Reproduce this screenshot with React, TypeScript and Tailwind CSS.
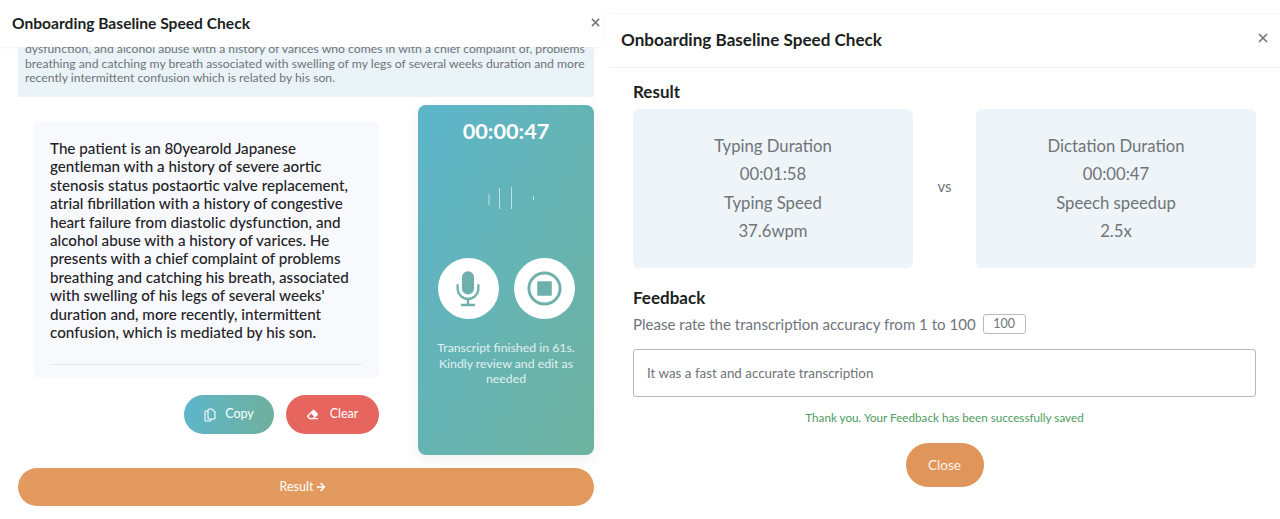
import React from 'react'
import { FaArrowRight, FaEraser } from 'react-icons/fa'

function CloseX({ className }: { className: string }) {
  return (
    <svg viewBox="0 0 10 10" className={className} fill="none" stroke="currentColor" strokeWidth="1.7">
      <path d="M1 1l8 8M9 1l-8 8" />
    </svg>
  )
}

function MicIcon() {
  return (
    <svg viewBox="0 0 30 42" className="w-[26px] h-[37px] text-[#6fb0ac]" fill="none" stroke="currentColor">
      <rect x="8" y="1" width="14" height="27" rx="7" fill="currentColor" stroke="none" />
      <path d="M3 17v4a12 12 0 0 0 24 0v-4" strokeWidth="2.6" strokeLinecap="round" />
      <path d="M15 33v6M7 40h16" strokeWidth="2.8" />
    </svg>
  )
}

function StopIcon() {
  return (
    <svg viewBox="0 0 36 36" className="w-[35px] h-[35px] text-[#6fb0ac]" fill="none" stroke="currentColor">
      <circle cx="18" cy="18" r="16" strokeWidth="3" />
      <rect x="10.5" y="10.5" width="15" height="15" rx="1" fill="currentColor" stroke="none" />
    </svg>
  )
}

function CopyIcon() {
  return (
    <svg viewBox="0 0 12 14" className="w-[12px] h-[14px]" fill="none" stroke="currentColor" strokeWidth="1.1">
      <path d="M5 1h3l3 3v6a1 1 0 0 1-1 1H5a1 1 0 0 1-1-1V2a1 1 0 0 1 1-1z" />
      <path d="M4 3H2a1 1 0 0 0-1 1v8a1 1 0 0 0 1 1h4a1 1 0 0 0 1-1v-1" />
    </svg>
  )
}

function Wave() {
  return (
    <svg viewBox="0 0 50 24" className="w-[50px] h-[24px] text-white/60" stroke="currentColor" strokeWidth="1">
      <path d="M2 8v11M12.5 2v21M24.5 1v22M46.5 10v4" />
    </svg>
  )
}

function StatCard({ rows }: { rows: string[] }) {
  return (
    <div className="w-[280px] h-[159px] bg-[#eef4f7] rounded-md flex flex-col items-center justify-center text-[16.7px] leading-[28.3px] text-[#6f7479]">
      {rows.map((r) => <div key={r}>{r}</div>)}
    </div>
  )
}

export default function App() {
  return (
    <div className="w-[1280px] h-[519px] bg-white flex overflow-hidden font-['Lato','Noto_Sans',sans-serif]">

      {/* recording step */}
      <div className="w-[604px] pt-[7px] shrink-0">
        <div className="h-[40px] flex items-start justify-between pl-[12px] pr-[4px] pt-[6px] shadow-[0_1px_2px_rgba(0,0,0,0.05)]">
          <h2 className="text-[15.6px] leading-[20px] font-bold text-[#1c1f22]">Onboarding Baseline Speed Check</h2>
          <CloseX className="w-[9px] h-[9px] text-[#777] mt-[5px]" />
        </div>

        <div className="mx-[18px] w-[576px] h-[50px] bg-[#eaf3f7] px-[7px] pb-[11px] overflow-hidden flex flex-col justify-end text-[12.2px] leading-[14.6px] text-[#6f7479]">
          <p className="whitespace-nowrap">dysfunction, and alcohol abuse with a history of varices who comes in with a chief complaint of, problems</p>
          <p className="whitespace-nowrap">breathing and catching my breath associated with swelling of my legs of several weeks duration and more</p>
          <p className="whitespace-nowrap">recently intermittent confusion which is related by his son.</p>
        </div>

        <div className="flex mt-[8px] ml-[34px] gap-[39px]">
          <div className="w-[345px] pt-[16px]">
            <div className="h-[257px] bg-[#f8f9fd] rounded-md pl-[16px] pr-[17px] pt-[18px] text-[15.2px] leading-[18.4px] text-[#1f2326] font-medium flex flex-col justify-between">
              <p>
                The patient is an 80yearold Japanese gentleman with a history of severe aortic stenosis status postaortic valve replacement, atrial fibrillation with a history of congestive heart failure from diastolic dysfunction, and alcohol abuse with a history of varices. He presents with a chief complaint of problems breathing and catching his breath, associated with swelling of his legs of several weeks' duration and, more recently, intermittent confusion, which is mediated by his son.
              </p>
              <div className="h-px bg-[#e6e8ee] mb-[13px]" />
            </div>
            <div className="flex justify-end gap-[12px] mt-[17px]">
              <button className="w-[90px] h-[39px] rounded-full bg-gradient-to-r from-[#5db6cb] to-[#6fb09c] text-white text-[12.5px] flex items-center justify-center gap-[9px]">
                <CopyIcon />
                Copy
              </button>
              <button className="w-[93px] h-[39px] rounded-full bg-[#e6665f] text-white text-[12.5px] flex items-center justify-center gap-[12px]">
                <FaEraser className="w-[11px] h-[11px]" />
                Clear
              </button>
            </div>
          </div>

          <div className="w-[176px] h-[350px] rounded-lg bg-gradient-to-br from-[#5cb5ca] to-[#6eb29e] shadow-[0_6px_16px_rgba(0,0,0,0.06)] text-white flex flex-col items-center">
            <div className="mt-[13px] text-[21.7px] leading-[27px] font-bold">00:00:47</div>
            <div className="mt-[41px] ml-[12px]"><Wave /></div>
            <div className="flex gap-[15px] mt-[48px]">
              <div className="w-[61px] h-[61px] rounded-full bg-white flex items-center justify-center"><MicIcon /></div>
              <div className="w-[61px] h-[61px] rounded-full bg-white flex items-center justify-center"><StopIcon /></div>
            </div>
            <p className="mt-[21px] w-[150px] text-center text-[12.3px] leading-[15.6px] text-white/80">
              Transcript finished in 61s. Kindly review and edit as needed
            </p>
          </div>
        </div>

        <button className="mt-[13px] ml-[18px] w-[576px] h-[38px] rounded-full bg-[#e29a5e] text-white text-[12.5px] pr-[6px] flex items-center justify-center gap-[3px]">
          Result <FaArrowRight className="w-[10px] h-[10px]" />
        </button>
      </div>

      {/* result step */}
      <div className="flex-1 ml-[6px] pt-[13px]">
        <div className="h-[55px] flex items-start justify-between pl-[11px] pr-[12px] pt-[15px] border-b border-[#eef0f1] border-t-[#f4f5f5] border-t">
          <h2 className="text-[17.1px] leading-[22px] font-bold text-[#1c1f22]">Onboarding Baseline Speed Check</h2>
          <CloseX className="w-[10px] h-[10px] text-[#777] mt-[4px]" />
        </div>

        <div className="pl-[23px] pr-[24px]">
          <h3 className="mt-[13px] text-[17px] leading-[22px] font-bold text-[#1c1f22]">Result</h3>
          <div className="mt-[6px] flex items-center justify-between">
            <StatCard rows={['Typing Duration', '00:01:58', 'Typing Speed', '37.6wpm']} />
            <span className="text-[15px] leading-[20px] text-[#6f7479] mb-[5px]">vs</span>
            <StatCard rows={['Dictation Duration', '00:00:47', 'Speech speedup', '2.5x']} />
          </div>

          <h3 className="mt-[20px] text-[17px] leading-[20px] font-bold text-[#1c1f22]">Feedback</h3>
          <div className="mt-[6px] flex items-center gap-[7px] text-[15.05px] leading-[20px] text-[#6f7479]">
            Please rate the transcription accuracy from 1 to 100
            <span className="w-[43px] h-[20px] border border-[#b8bcbf] rounded-[3px] text-[12.5px] leading-[18px] text-center">100</span>
          </div>
          <div className="mt-[15px] h-[48px] border border-[#b4b8bb] rounded-[3px] px-[13px] flex items-center text-[13.4px] text-[#6f7479]">
            It was a fast and accurate transcription
          </div>
          <p className="mt-[13px] text-center text-[11.7px] leading-[15px] text-[#4f9a62]">Thank you. Your Feedback has been successfully saved</p>
          <div className="mt-[18px] flex justify-center">
            <button className="w-[78px] h-[44px] rounded-full bg-[#e0955a] text-white/90 text-[13.5px]">Close</button>
          </div>
        </div>
      </div>
    </div>
  )
}
